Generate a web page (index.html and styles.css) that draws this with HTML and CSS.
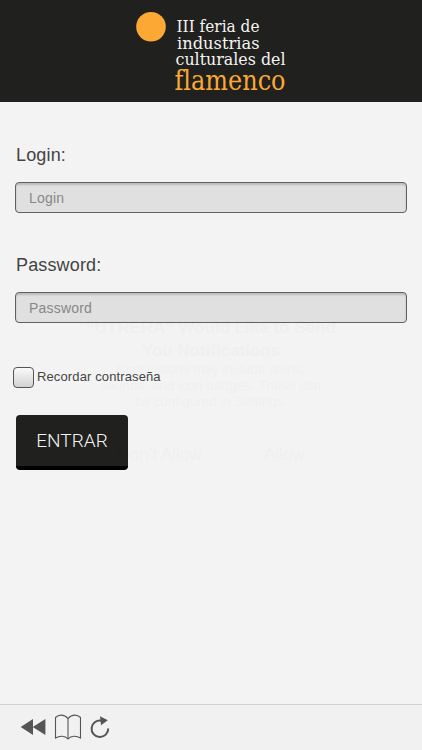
FILE: index.html
```html
<!DOCTYPE html>
<html lang="es">
<head>
  <meta charset="UTF-8">
  <meta name="viewport" content="width=device-width, initial-scale=1.0">
  <title>Login</title>
  <link rel="stylesheet" href="styles.css">
</head>
<body>
  <div class="page">
    <header class="header">
      <svg class="logo" width="160" height="102" viewBox="130 0 160 102">
        <circle cx="151" cy="26.8" r="14.8" fill="#fba834"/>
        <g class="logo-text">
          <text x="176.5" y="32.3" textLength="83" lengthAdjust="spacingAndGlyphs">III feria de</text>
          <text x="177" y="49.3" textLength="82.5" lengthAdjust="spacingAndGlyphs">industrias</text>
          <text x="175.5" y="65" textLength="110" lengthAdjust="spacingAndGlyphs">culturales del</text>
          <text class="logo-name" x="174.5" y="89.8" textLength="111" lengthAdjust="spacingAndGlyphs">flamenco</text>
        </g>
      </svg>
    </header>

    <form class="login">
      <label class="label" for="user">Login:</label>
      <input class="field" id="user" type="text" placeholder="Login">
      <label class="label" for="pass">Password:</label>
      <input class="field" id="pass" type="password" placeholder="Password">
      <label class="remember">
        <input class="check" type="checkbox">
        <span>Recordar contraseña</span>
      </label>
      <button class="submit" type="button">ENTRAR</button>
    </form>

    <!-- Permission alert, almost faded out -->
    <div class="alert">
      <div class="alert-title">“UTRERA” Would Like to Send<br>You Notifications</div>
      <div class="alert-text">Notifications may include alerts,<br>sounds, and icon badges. These can<br>be configured in Settings.</div>
      <div class="alert-buttons"><span>Don’t Allow</span><span>Allow</span></div>
    </div>

    <footer class="toolbar">
      <svg width="140" height="45" viewBox="0 705 140 45">
        <path d="M20.7 727 L33 719 V735 Z M32.7 727 L45.4 719 V735 Z" fill="#555"/>
        <path d="M68 718.8 C65 714.3 59 714 55.5 717.5 V738 C59.500 735.500 65 735.500 68 739 C71 735.500 76.500 735.500 80.500 738 V717.500 C77 714 71 714.300 68 718.800 V739" fill="none" stroke="#555" stroke-width="1.1"/>
        <path d="M101.500 720.600 A8.300 8.300 0 1 0 108.200 728.500" fill="none" stroke="#555" stroke-width="2"/>
        <path d="M100 716.300 L107.800 720.300 L101 725.300 Z" fill="#555"/>
      </svg>
    </footer>
  </div>
</body>
</html>
```
FILE: styles.css
```css
body {
  margin: 0;
  background: #f3f3f3;
  color: #444;
  font-family: "Liberation Sans", Arial, sans-serif;
}
.page {
  position: relative;
  display: flex;
  flex-direction: column;
  height: 750px;
  overflow: hidden;
}
.header {
  display: flex;
  box-sizing: border-box;
  height: 102px;
  padding-left: 130px;
  background: #20201e;
}
.logo {
  display: block;
}
.logo-text {
  font-family: "DejaVu Serif Condensed", "DejaVu Serif", serif;
  font-size: 17.5px;
  fill: #f4f4f2;
}
.logo-name {
  font-size: 27px;
  fill: #fba834;
}
/* Form */
.login {
  display: flex;
  flex: 1;
  flex-direction: column;
  align-items: flex-start;
  padding: 42px 15px 0;
}
.label {
  height: 38px;
  padding-left: 1px;
  font-size: 18px;
  line-height: 22px;
  letter-spacing: 0.15px;
}
.field {
  box-sizing: border-box;
  width: 392px;
  height: 31px;
  margin: 0 0 41px;
  padding: 0 13px;
  border: 1px solid #606060;
  border-radius: 4px;
  background: #e0e0e0;
  box-shadow: inset 0 2px 2px #bcbcbc;
  font-family: inherit;
  font-size: 14px;
  letter-spacing: 0.2px;
}
.field::placeholder {
  color: #888;
  opacity: 1;
}
.remember {
  display: flex;
  gap: 3px;
  margin: 3px 0 0 -2px;
  font-size: 13px;
  line-height: 20px;
  letter-spacing: 0.12px;
}
.check {
  appearance: none;
  box-sizing: border-box;
  width: 21px;
  height: 21px;
  margin: 0;
  border: 1px solid #555;
  border-radius: 4px;
  background: linear-gradient(#fafafa, #d2d2d2);
}
.submit {
  width: 112px;
  height: 55px;
  margin: 27px 0 0 1px;
  padding: 0 0 1px;
  border: 0;
  border-bottom: 4px solid #000;
  border-radius: 4px;
  background: #20201e;
  color: #f3f3f3;
  font-family: Roboto, "Liberation Sans", sans-serif;
  font-size: 19px;
  font-weight: 300;
}
/* Fading alert */
.alert {
  position: absolute;
  top: 316px;
  left: 86px;
  width: 250px;
  color: #000;
  text-align: center;
  white-space: nowrap;
  opacity: 0.01;
  pointer-events: none;
}
.alert-title {
  font-size: 17px;
  font-weight: bold;
  line-height: 23px;
}
.alert-text {
  font-size: 13.5px;
  line-height: 16px;
}
.alert-buttons {
  display: flex;
  justify-content: space-around;
  margin-top: 35px;
  font-size: 17px;
}
/* Bottom toolbar */
.toolbar {
  display: flex;
  height: 45px;
  border-top: 1px solid #d0d0d0;
  background: #f1f1f1;
}
```
